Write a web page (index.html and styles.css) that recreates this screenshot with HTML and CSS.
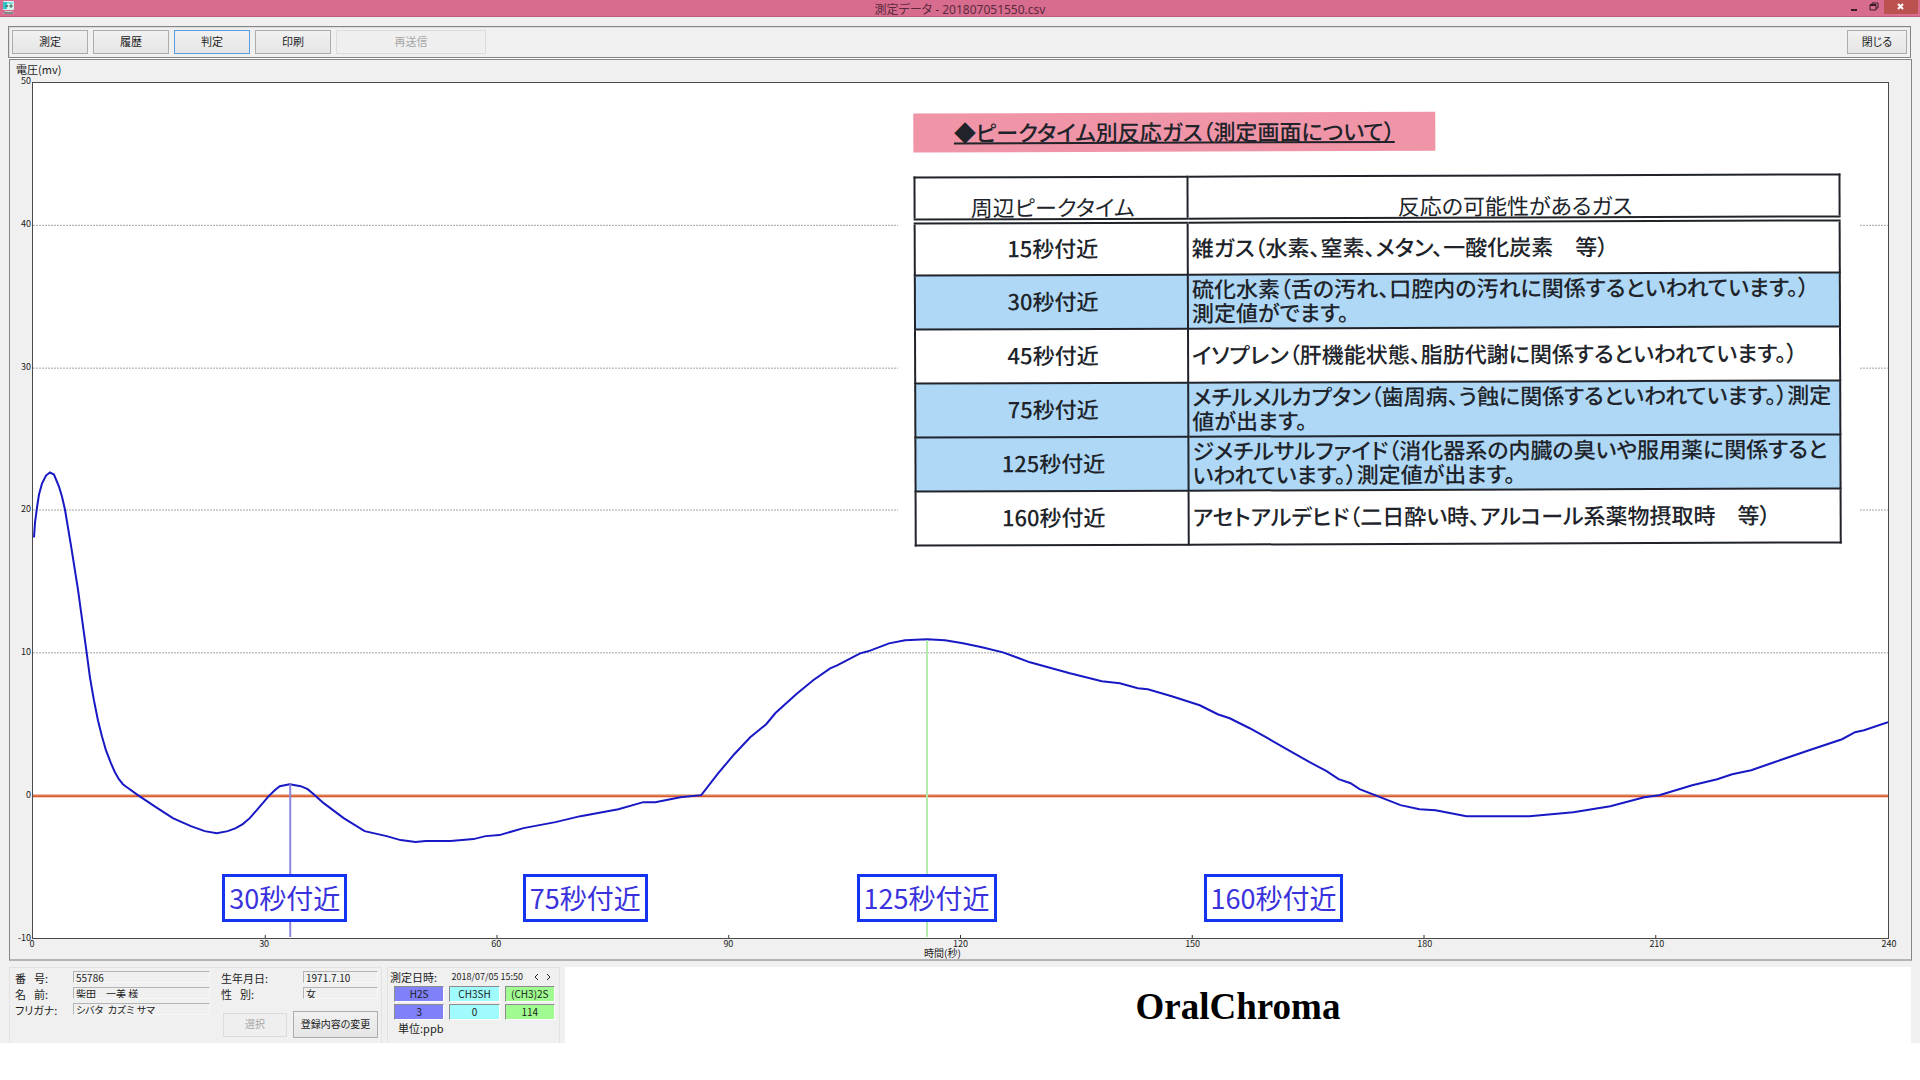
FILE: index.html
```html
<!DOCTYPE html>
<html lang="ja">
<head>
<meta charset="utf-8">
<title>測定データ - 201807051550.csv</title>
<link rel="stylesheet" href="styles.css">
</head>
<body>
<div class="app">
  <header class="titlebar">
    <svg class="app-icon" viewBox="0 0 14 14" aria-hidden="true">
      <rect x="1" y="0" width="11" height="9" rx="1" fill="#d8f4ee"/>
      <rect x="1" y="1" width="4" height="7" fill="#35c4cc"/>
      <rect x="5" y="1" width="6" height="2" fill="#7fe0dc"/>
      <path d="M3 5h3M5 4v2M8 4h2v2H8z" stroke="#44685e" fill="none"/>
      <path d="M3 10h7l2 3H1z" fill="#c9c9c9"/>
      <path d="M2 12h9" stroke="#3d4a48"/>
    </svg>
    <h1 class="titlebar-text">測定データ - 201807051550.csv</h1>
    <div class="window-buttons">
      <button class="win-btn" aria-label="最小化"><svg viewBox="0 0 10 10"><path d="M2 7h6v2H2z" fill="#3a1c28"/></svg></button>
      <button class="win-btn" aria-label="元に戻す"><svg viewBox="0 0 10 10"><path d="M3 3V1h6v5H7" stroke="#3a1c28" fill="none"/><path d="M1 3h6v5H1z" stroke="#3a1c28" fill="none"/><path d="M1 3h6" stroke="#3a1c28" stroke-width="2"/></svg></button>
      <button class="win-btn win-close" aria-label="終了"><svg viewBox="0 0 10 10"><path d="M2 2l5 5M7 2l-5 5" stroke="#fff" stroke-width="2"/></svg></button>
    </div>
  </header>

  <nav class="toolbar">
    <button class="btn">測定</button>
    <button class="btn">履歴</button>
    <button class="btn btn-active">判定</button>
    <button class="btn">印刷</button>
    <button class="btn btn-wide" disabled>再送信</button>
    <button class="btn btn-close">閉じる</button>
  </nav>

  <main class="graph">
    <div class="y-title">電圧(mv)</div>
    <div class="y-axis">
      <span>50</span><span>40</span><span>30</span><span>20</span><span>10</span><span>0</span><span>-10</span>
    </div>
    <div class="plot">
      <svg class="plot-svg" viewBox="32 83 1857 856" preserveAspectRatio="none" role="img" aria-label="電圧の時間変化">
        <g class="grid-lines">
          <path d="M32 225.500H1889M32 368.500H1889M32 510.500H1889M32 653.500H1889"/>
        </g>
        <path class="zero-glow" d="M32 795.500H1889"/>
        <path class="zero-line" d="M32 797H1889"/>
        <path class="ticks" d="M264.500 936V939M496.500 936V939M728.500 936V939M960.500 936V939M1192.500 936V939M1424.500 936V939M1656.500 936V939"/>
        <polyline class="curve" points="33,538 34,523 36,508 38,495 41,484 45,476 49,473 53,475 58,487 61,497 64,510 70,546 77,590 85,648 89,678 93,701 97,721 101,737 105,751 110,764 114,773 118,780 122,785 126,788 137,796 155,808 172,819 190,827 204,832 216,834 227,832 235,829 242,825 249,819 256,811 268,797 274,791 279,787 289,785 300,787 307,790 313,795 323,804 343,819 364,832 386,837 400,841 415,843 425,842 450,842 473,840 485,837 499,836 523,829 555,823 580,817 618,810 643,803 655,803 680,798 701,796 718,774 734,755 750,738 766,725 775,714 796,695 813,681 830,669 837,666 860,654 868,652 889,644 905,641 927,640 945,641 963,644 982,648 1003,653 1030,663 1070,674 1102,682 1120,684 1138,689 1148,690 1172,697 1200,706 1218,715 1230,719 1250,729 1268,739 1287,750 1310,763 1327,772 1339,780 1351,784 1360,790 1378,797 1401,806 1420,810 1436,811 1467,817 1497,817 1530,817 1574,813 1611,807 1645,798 1660,796 1693,786 1718,780 1733,775 1752,771 1775,763 1810,751 1843,740 1856,733 1865,731 1889,723"/>
        <path class="peak-h2s" d="M289.500 785V938"/>
        <path class="peak-dms" d="M927 641V938"/>
      </svg>

      <section class="sheet">
        <div class="sheet-scan">
          <h2 class="sheet-title"><span>◆ピークタイム別反応ガス（測定画面について）</span></h2>
          <table class="gas-table">
            <thead>
              <tr><th>周辺ピークタイム</th><th>反応の可能性があるガス</th></tr>
            </thead>
            <tbody>
              <tr><td>15秒付近</td><td>雑ガス（水素、窒素、メタン、一酸化炭素　等）</td></tr>
              <tr class="hit"><td>30秒付近</td><td>硫化水素（舌の汚れ、口腔内の汚れに関係するといわれています。）<br>測定値がでます。</td></tr>
              <tr><td>45秒付近</td><td>イソプレン（肝機能状態、脂肪代謝に関係するといわれています。）</td></tr>
              <tr class="hit"><td>75秒付近</td><td>メチルメルカプタン（歯周病、う蝕に関係するといわれています。）測定<br>値が出ます。</td></tr>
              <tr class="hit"><td>125秒付近</td><td>ジメチルサルファイド（消化器系の内臓の臭いや服用薬に関係すると<br>いわれています。）測定値が出ます。</td></tr>
              <tr><td>160秒付近</td><td>アセトアルデヒド（二日酔い時、アルコール系薬物摂取時　等）</td></tr>
            </tbody>
          </table>
        </div>
      </section>

      <span class="marker marker-30">30秒付近</span>
      <span class="marker marker-75">75秒付近</span>
      <span class="marker marker-125">125秒付近</span>
      <span class="marker marker-160">160秒付近</span>
    </div>
    <div class="x-axis">
      <span>0</span><span>30</span><span>60</span><span>90</span><span>120</span><span>150</span><span>180</span><span>210</span><span>240</span>
    </div>
    <div class="x-title">時間(秒)</div>
  </main>

  <footer class="bottom">
    <form class="patient">
      <div class="fields">
        <label for="no"><span>番</span><span>号:</span></label><input id="no" value="55786" readonly>
        <label for="name"><span>名</span><span>前:</span></label><input id="name" value="柴田　一美 様" readonly>
        <label for="kana">フリガナ:</label><input id="kana" value="シバタ  カズミ サマ" readonly>
      </div>
      <div class="side">
        <div class="fields fields-side">
          <label for="birth">生年月日:</label><input id="birth" value="1971.7.10" readonly>
          <label for="sex"><span>性</span><span>別:</span></label><input id="sex" value="女" readonly>
        </div>
        <div class="actions">
          <button type="button" class="btn btn-pick" disabled>選択</button>
          <button type="button" class="btn btn-edit">登録内容の変更</button>
        </div>
      </div>
    </form>
    <section class="result">
      <div class="result-head">
        <span>測定日時:</span>
        <time datetime="2018-07-05T15:50">2018/07/05 15:50</time>
        <button class="step" aria-label="前へ"><svg viewBox="0 0 6 8"><path d="M5 1L2 4l3 3" /></svg></button>
        <button class="step" aria-label="次へ"><svg viewBox="0 0 6 8"><path d="M1 1l3 3-3 3" /></svg></button>
      </div>
      <table class="values">
        <tr><th class="h2s">H2S</th><th class="mm">CH3SH</th><th class="dms">(CH3)2S</th></tr>
        <tr><td class="h2s">3</td><td class="mm">0</td><td class="dms">114</td></tr>
      </table>
      <div class="unit">単位:ppb</div>
    </section>
    <div class="brand">OralChroma</div>
  </footer>
</div>
</body>
</html>
```
FILE: styles.css
```css
* {
  box-sizing: border-box;
}

body {
  margin: 0;
  background: #fff;
  color: #1c1c1c;
  font-family: "Noto Sans CJK JP", sans-serif;
  font-size: 11px;
  line-height: 14px;
}

button,
input {
  font: inherit;
  color: inherit;
}

.app {
  display: flex;
  flex-direction: column;
  min-height: calc(100vh - 37px);
  background: #f0f0f0;
}

/* title bar */
.titlebar {
  display: grid;
  grid-template-columns: 1fr auto 1fr;
  align-items: start;
  height: 17px;
  padding: 0 2px;
  background: #d76c8f;
  border-bottom: 1px solid #b9607c;
}

.app-icon {
  width: 14px;
  height: 14px;
  margin-top: 1px;
}

.titlebar-text {
  margin: 0;
  font: 400 12px/20px "Noto Sans", "Noto Sans CJK JP", sans-serif;
  font-feature-settings: "palt";
  color: #5a2a3a;
}

.window-buttons {
  display: flex;
  justify-content: flex-end;
}

.win-btn {
  display: flex;
  align-items: center;
  justify-content: center;
  width: 20px;
  height: 14px;
  padding: 0;
  border: 0;
  background: none;
}

.win-btn svg {
  width: 10px;
  height: 10px;
}

.win-close {
  width: 34px;
  background: #bb5250;
}

/* toolbar */
.toolbar {
  display: flex;
  gap: 5px;
  margin: 9px 9px 1px 8px;
  padding: 3px;
  border: 1px solid #858585;
  box-shadow: inset 1px 1px #dcdcdc, 0 1px #fff;
}

.btn {
  width: 76px;
  height: 24px;
  padding: 0 0 2px;
  border: 1px solid #acacac;
  border-radius: 0;
  background: linear-gradient(#f1f1f1, #e5e5e5);
  text-align: center;
  white-space: nowrap;
}

.btn-active {
  border-color: #569de5;
}

.btn-wide {
  width: 150px;
}

.btn-close {
  width: 60px;
  margin-left: auto;
  font-feature-settings: "palt";
}

.btn:disabled {
  border-color: #dcdcdc;
  background: #efefef;
  color: #a6a6a6;
}

/* graph */
.graph {
  flex: 1;
  display: grid;
  grid-template: 22px 1fr 9px 10px / 22px 1fr;
  margin: 0 8px 0 9px;
  padding: 0 22px 1px 0;
  border: 1px solid #858585;
  border-bottom: 2px solid #b4b4b4;
}

.y-title {
  grid-column: 1 / -1;
  padding: 2px 0 0 6px;
  font-feature-settings: "palt";
}

.y-axis {
  display: flex;
  flex-direction: column;
  justify-content: space-between;
  margin: -7px 0 -5px;
  padding-right: 1px;
  font-size: 9px;
  line-height: 12px;
  text-align: right;
}

.plot {
  position: relative;
  min-height: 520px;
  border: 1px solid #4a4a4a;
  background: #fff;
}

.plot-svg {
  position: absolute;
  width: 100%;
  height: 100%;
}

.plot-svg path,
.plot-svg polyline {
  fill: none;
  vector-effect: non-scaling-stroke;
}

.plot-svg .grid-lines path {
  stroke: #a4a4a4;
  stroke-dasharray: 2 1;
}

.zero-glow {
  stroke: #dcb894;
}

.zero-line {
  stroke: #dd5528;
  stroke-width: 2;
}

.ticks {
  stroke: #333;
}

.curve {
  stroke: #1818c4;
  stroke-width: 2;
}

.peak-h2s {
  stroke: #8c86dc;
  stroke-width: 2;
}

.peak-dms {
  stroke: #b4ecab;
  stroke-width: 2;
}

.x-axis {
  grid-column: 2;
  display: flex;
  justify-content: space-between;
  margin: 0 -12px;
  font-size: 9px;
  line-height: 9px;
}

.x-axis span {
  width: 24px;
  text-align: center;
}

.x-title {
  grid-column: 1 / -1;
  padding-right: 14px;
  font-size: 10px;
  line-height: 10px;
  text-align: center;
  font-feature-settings: "palt";
}

/* gas reference sheet lying over the plot */
.sheet {
  position: absolute;
  top: 25px;
  right: 29px;
  width: 961px;
  padding: 4px 18px 12px 16px;
  background: #fff;
  color: #20242a;
  font-size: 22px;
  line-height: 24px;
  font-feature-settings: "palt";
}

.sheet-scan {
  transform: rotate(-0.2deg);
}

.sheet-title {
  width: 522px;
  height: 39px;
  margin: 0 0 24px;
  background: #f094a8;
  font-size: 22px;
  font-weight: 500;
  line-height: 36px;
  text-align: center;
}

.sheet-title span {
  text-decoration: underline;
  text-decoration-skip-ink: none;
  text-decoration-thickness: 2px;
}

.gas-table {
  width: 100%;
  table-layout: fixed;
  border-collapse: collapse;
  font-weight: 500;
}

.gas-table th,
.gas-table td {
  height: 54px;
  padding: 0 0 4px 3px;
  border: 2px solid #20242a;
  white-space: nowrap;
}

.gas-table th {
  height: 44px;
  padding-bottom: 0;
  border-bottom: 6px double #20242a;
  font-weight: 400;
  vertical-align: bottom;
}

.gas-table th:first-child {
  width: 273px;
}

.gas-table td:first-child {
  text-align: center;
}

.gas-table .hit {
  background: #aed8f6;
}

/* peak time markers */
.marker {
  position: absolute;
  bottom: 16px;
  padding: 0 4px;
  border: 3px solid #1534f0;
  background: #fff;
  color: #3a32dc;
  font-size: 27px;
  line-height: 42px;
}

.marker-30 {
  left: 10.2%;
}

.marker-75 {
  left: 26.4%;
}

.marker-125 {
  left: 44.4%;
}

.marker-160 {
  left: 63.1%;
}

/* patient and result panels */
.bottom {
  display: flex;
  gap: 5px;
  margin: 6px 9px 0;
}

.patient,
.result {
  border: 1px solid #e2e2e2;
  border-bottom: 0;
  font-feature-settings: "palt";
}

.patient {
  display: flex;
  width: 373px;
  padding: 3px 3px 0 5px;
}

.fields {
  display: grid;
  grid-template-columns: 58px 137px;
  grid-auto-rows: 12px;
  row-gap: 4px;
  align-content: start;
  margin-right: 11px;
}

.fields label {
  display: flex;
  justify-content: space-between;
  width: 33px;
  white-space: nowrap;
}

.fields input {
  width: 100%;
  height: 12px;
  padding: 0 0 0 2px;
  border: 1px solid #c4c4c4;
  border-color: #b4b4b4 #f8f8f8 #f8f8f8 #b4b4b4;
  background: #f0f0f0;
  font-size: 10px;
  line-height: 10px;
}

.side {
  flex: 1;
}

.fields-side {
  grid-template-columns: 82px 1fr;
  margin: 0;
}

.actions {
  display: flex;
  justify-content: flex-end;
  align-items: center;
  gap: 6px;
  margin-top: 12px;
}

.btn-pick {
  width: 64px;
  font-size: 10px;
}

.btn-edit {
  width: 85px;
  height: 27px;
  font-size: 10px;
}

.result {
  width: 173px;
  padding: 2px 3px 0 2px;
}

.result-head {
  display: flex;
  align-items: center;
  gap: 5px;
  padding-right: 2px;
  white-space: nowrap;
}

.result-head time {
  flex: 1;
  font-size: 9px;
  text-align: right;
}

.step {
  width: 8px;
  height: 14px;
  padding: 0;
  border: 0;
  background: none;
}

.step:first-of-type {
  margin-left: 5px;
}

.step svg {
  display: block;
  width: 6px;
  height: 8px;
}

.step path {
  fill: none;
  stroke: #222;
}

.values {
  width: 171px;
  table-layout: fixed;
  border-collapse: separate;
  border-spacing: 5px 2px;
  margin: 0 0 0 -1px;
}

.values th,
.values td {
  height: 16px;
  padding: 0;
  border: 1px solid;
  border-color: #8c8c8c #fff #fff #8c8c8c;
  font-size: 10px;
  font-weight: 400;
  line-height: 12px;
  text-align: center;
}

.h2s {
  background: #8080f8;
}

.mm {
  background: #a0fcfc;
}

.dms {
  background: #a0fc90;
}

.unit {
  padding-left: 8px;
  line-height: 12px;
}

.brand {
  flex: 1;
  min-height: 76px;
  padding-top: 4px;
  background: #fff;
  color: #000;
  font: 700 37px/72px "Liberation Serif", serif;
  text-align: center;
}
```
